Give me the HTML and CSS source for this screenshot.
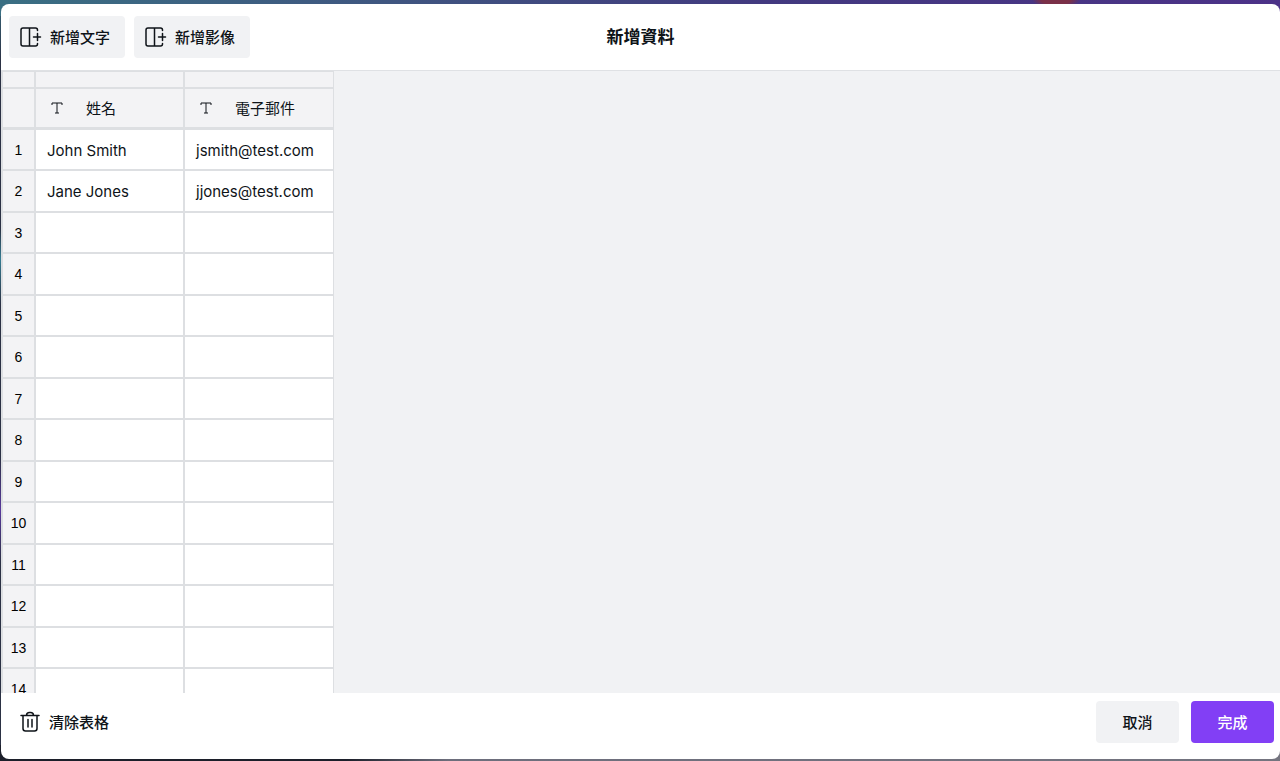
FILE: index.html
```html
<!DOCTYPE html>
<html lang="zh-Hant">
<head>
    <meta charset="UTF-8">
    <meta name="viewport" content="width=device-width, initial-scale=1.0">
    <title>新增資料</title>
    <link rel="stylesheet" href="styles.css">
</head>
<body>
    <div class="dialog">
        <!-- Top bar -->
        <header class="toolbar">
            <div class="toolbar-actions">
                <button class="btn btn-add" type="button">
                    <svg class="icon" viewBox="0 0 22 22" aria-hidden="true">
                        <path d="M17.500 4.500V4A2 2 0 0 0 15.500 2H3A2 2 0 0 0 1 4v14a2 2 0 0 0 2 2h12.500a2 2 0 0 0 2-2v-.5M9.500 2v18M13.500 11h7M17.500 7.500v7"/>
                    </svg>
                    新增文字
                </button>
                <button class="btn btn-add" type="button">
                    <svg class="icon" viewBox="0 0 22 22" aria-hidden="true">
                        <path d="M17.500 4.500V4A2 2 0 0 0 15.500 2H3A2 2 0 0 0 1 4v14a2 2 0 0 0 2 2h12.500a2 2 0 0 0 2-2v-.5M9.500 2v18M13.500 11h7M17.500 7.500v7"/>
                    </svg>
                    新增影像
                </button>
            </div>
            <h1 class="title">新增資料</h1>
        </header>

        <!-- Data table -->
        <main class="sheet">
            <table class="grid">
                <colgroup>
                    <col class="col-index">
                    <col class="col-data">
                    <col class="col-data">
                </colgroup>
                <thead>
                    <tr class="handles"><td></td><td></td><td></td></tr>
                    <tr class="fields">
                        <td></td>
                        <th scope="col">
                            <div class="field">
                                <svg class="type-icon" viewBox="0 0 12 12" aria-hidden="true"><path d="M1 3V1h10v2M6 1v10M4 11h4"/></svg>
                                姓名
                            </div>
                        </th>
                        <th scope="col">
                            <div class="field">
                                <svg class="type-icon" viewBox="0 0 12 12" aria-hidden="true"><path d="M1 3V1h10v2M6 1v10M4 11h4"/></svg>
                                電子郵件
                            </div>
                        </th>
                    </tr>
                </thead>
                <tbody>
                    <tr><th scope="row">1</th><td>John Smith</td><td>jsmith@test.com</td></tr>
                    <tr><th scope="row">2</th><td>Jane Jones</td><td>jjones@test.com</td></tr>
                    <tr><th scope="row">3</th><td></td><td></td></tr>
                    <tr><th scope="row">4</th><td></td><td></td></tr>
                    <tr><th scope="row">5</th><td></td><td></td></tr>
                    <tr><th scope="row">6</th><td></td><td></td></tr>
                    <tr><th scope="row">7</th><td></td><td></td></tr>
                    <tr><th scope="row">8</th><td></td><td></td></tr>
                    <tr><th scope="row">9</th><td></td><td></td></tr>
                    <tr><th scope="row">10</th><td></td><td></td></tr>
                    <tr><th scope="row">11</th><td></td><td></td></tr>
                    <tr><th scope="row">12</th><td></td><td></td></tr>
                    <tr><th scope="row">13</th><td></td><td></td></tr>
                    <tr><th scope="row">14</th><td></td><td></td></tr>
                </tbody>
            </table>
        </main>

        <!-- Bottom bar -->
        <footer class="footer">
            <button class="btn btn-clear" type="button">
                <svg class="icon" viewBox="0 0 22 22" aria-hidden="true">
                    <path d="M2 4.500h18M7.500 4.500a3 3 0 0 1 3-3h1a3 3 0 0 1 3 3M4 4.500V17.500a2.500 2.500 0 0 0 2.500 2.500h9a2.500 2.500 0 0 0 2.500-2.500V4.500M9 8.500v7.500M13 8.500v7.500"/>
                </svg>
                清除表格
            </button>
            <div class="footer-actions">
                <button class="btn btn-action" type="button">取消</button>
                <button class="btn btn-action btn-primary" type="button">完成</button>
            </div>
        </footer>
    </div>
</body>
</html>
```
FILE: styles.css
```css
* {
    box-sizing: border-box;
}

/* Blurred page behind the dialog shows only at the edges */
body {
    height: 100vh;
    margin: 0;
    padding: 4px 0 2px 1px;
    overflow: hidden;
    font-family: "Noto Sans", "Noto Sans CJK TC", sans-serif;
    font-size: 15px;
    color: #0e1318;
    background:
        radial-gradient(ellipse 24px 8px at 82.500% 0, #7a3048 60%, transparent) no-repeat,
        linear-gradient(90deg, #3a6f83, #3f5680 30%, #42397f 60%, #4c3288) top / 100% 16px no-repeat,
        linear-gradient(90deg, #1c1f2a 27%, #6d6e7c 35%, #74747f) bottom / 100% 16px no-repeat,
        linear-gradient(#37677b, #2b3144 8%, #2b3144 30%, #357c92 34%, #2b3144 40%, #2b3144 60%, #57389c 67%, #2b3144 74%);
}

.dialog {
    display: flex;
    flex-direction: column;
    height: 100%;
    overflow: hidden;
    border-radius: 8px;
    background: #fff;
}

/* Top bar */
.toolbar {
    display: grid;
    grid-template-columns: 1fr auto 1fr;
    align-items: center;
    height: 67px;
    flex: none;
    padding: 0 8px;
    border-bottom: 1px solid #dfe1e4;
}

.toolbar-actions {
    display: flex;
    gap: 9px;
}

.title {
    margin: 0;
    font-size: 17px;
    font-weight: 700;
    line-height: 24px;
}

/* Buttons */
.btn {
    display: flex;
    align-items: center;
    justify-content: center;
    height: 42px;
    border: 0;
    border-radius: 4px;
    font: inherit;
    font-weight: 500;
    line-height: 24px;
    color: inherit;
    background: #f1f2f4;
    cursor: pointer;
}

.btn-add {
    justify-content: flex-start;
    gap: 8px;
    width: 116px;
    padding: 0 0 0 11px;
}

.btn-clear {
    gap: 8px;
    padding: 0 12px;
    background: none;
}

.btn-action {
    width: 83px;
    padding: 0;
}

.btn-primary {
    color: #fff;
    background: #823ff5;
}

.icon {
    width: 22px;
    height: 22px;
    fill: none;
    stroke: currentColor;
    stroke-width: 1.500;
    stroke-linecap: round;
    stroke-linejoin: round;
}

/* Table area */
.sheet {
    flex: 1;
    min-height: 0;
    overflow: hidden;
    background: #f1f2f4;
}

.grid {
    width: 333px;
    table-layout: fixed;
    border-collapse: separate;
    border-spacing: 0;
}

.col-index {
    width: 35px;
}

.col-data {
    width: 149px;
}

.grid td,
.grid th {
    padding: 0;
    border: 0 solid #dddfe2;
    border-width: 0 2px 2px 0;
    font-weight: 400;
    text-align: left;
    line-height: 20px;
}

.grid tr > :first-child {
    border-left-width: 2px;
}

.grid tr > :last-child {
    border-right-width: 1px;
}

.grid thead td,
.grid thead th,
.grid tbody th {
    background: #f3f3f5;
}

.grid .handles td {
    height: 18px;
    border-top-width: 1px;
}

.grid .fields td,
.grid .fields th {
    height: 41px;
    border-bottom-width: 3px;
}

.field {
    display: flex;
    align-items: center;
    gap: 23px;
    padding-left: 15px;
}

.type-icon {
    width: 12px;
    height: 12px;
    fill: none;
    stroke: currentColor;
    stroke-width: 1;
}

/* Rows alternate so that two of them take 83px */
.grid tbody tr {
    height: 41px;
}

.grid tbody tr:nth-child(even) {
    height: 42px;
}

.grid tbody td {
    padding: 2px 0 0 11px;
    font-family: Inter, "Noto Sans CJK TC", sans-serif;
    background: #fff;
}

.grid tbody th {
    font-family: "Liberation Sans", sans-serif;
    font-size: 14px;
    text-align: center;
    color: #000;
}

/* Bottom bar */
.footer {
    display: flex;
    justify-content: space-between;
    height: 66px;
    flex: none;
    padding: 8px 6px;
}

.footer-actions {
    display: flex;
    gap: 12px;
}
```
